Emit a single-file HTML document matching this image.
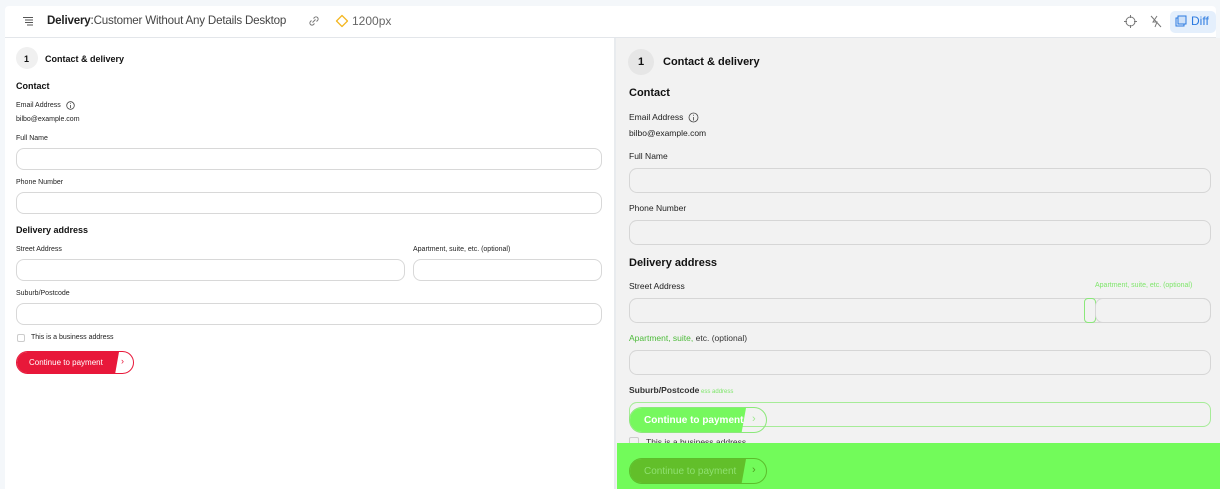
<!DOCTYPE html><html><head><style>
*{margin:0;padding:0;box-sizing:border-box}
body{width:1220px;height:489px;background:#f4f7fa;font-family:"Liberation Sans",sans-serif;color:#111;position:relative;overflow:hidden}
.a{position:absolute;white-space:nowrap}
.card{position:absolute;left:5px;top:6px;width:1211px;height:483px;background:#fff;border-radius:4px 4px 0 0}
.hdr{position:absolute;left:5px;top:37px;width:1211px;height:1px;background:#e3e6ea}
.inp{position:absolute;border:1px solid #d8d8d8;border-radius:8px;background:#fff}
.rp .inp{background:#f2f2f2;border-color:#d6d6d6}
.lb{font-size:7px;color:#222}
.rlb{font-size:8.5px;color:#222}
.b{font-weight:bold}
.g{color:#7ee66a}
</style></head><body>
<div class="card"></div>
<div class="hdr"></div>
<svg class="a" style="left:22px;top:16px" width="12" height="10"><path d="M1 1.5h10M3 4h8M3 6.5h8M5 9h6" stroke="#555" stroke-width="1"/></svg>
<div class="a" style="left:47px;top:14px;font-size:11.6px;color:#222;letter-spacing:-0.2px"><b>Delivery</b>:<span style="color:#444">Customer Without Any Details Desktop</span></div>
<svg class="a" style="left:308px;top:15px" width="12" height="12"><path d="M4.5 7.5l3-3M5.5 3.5l1-1a2.1 2.1 0 013 3l-1 1M6.5 8.5l-1 1a2.1 2.1 0 01-3-3l1-1" stroke="#777" stroke-width="1" fill="none"/></svg>
<svg class="a" style="left:335px;top:14px" width="14" height="14"><path d="M7 1.5L12.5 7 7 12.5 1.5 7z" stroke="#f3b724" stroke-width="1.3" fill="none" stroke-linejoin="round"/></svg>
<div class="a" style="left:352px;top:14px;font-size:12px;color:#666">1200px</div>
<svg class="a" style="left:1124px;top:15px" width="13" height="13"><circle cx="6.5" cy="6.5" r="4.5" stroke="#777" fill="none"/><path d="M6.5 0v3M6.5 10v3M0 6.5h3M10 6.5h3" stroke="#777"/></svg>
<svg class="a" style="left:1150px;top:15px" width="12" height="13"><path d="M7 1L3 7h4l-2 5M1 1l10 11" stroke="#777" fill="none"/></svg>
<div class="a" style="left:1170px;top:11px;width:46px;height:22px;background:#e4effc;border-radius:5px"></div>
<svg class="a" style="left:1175px;top:15px" width="12" height="12"><rect x="1" y="3" width="8" height="8" stroke="#2b7ae0" fill="none"/><rect x="3" y="1" width="8" height="8" stroke="#2b7ae0" fill="#cfe1f8"/></svg>
<div class="a" style="left:1191px;top:14px;font-size:12px;color:#2b7ae0">Diff</div>

<div class="a" style="left:614px;top:38px;width:2px;height:451px;background:#e8ebee"></div>

<div class="a" style="left:16px;top:47px;width:22px;height:22px;border-radius:50%;background:#f0f0f0"></div>
<div class="a b" style="left:24px;top:54px;font-size:9px">1</div>
<div class="a b" style="left:45px;top:54px;font-size:9px">Contact &amp; delivery</div>
<div class="a b" style="left:16px;top:81px;font-size:9px">Contact</div>
<div class="a lb" style="left:16px;top:102px">Email Address</div>
<svg class="a" style="left:66px;top:101px" width="9" height="9"><circle cx="4.5" cy="4.5" r="3.8" stroke="#444" stroke-width=".8" fill="none"/><path d="M4.5 4v3M4.5 2.2v.8" stroke="#444" stroke-width=".8"/></svg>
<div class="a lb" style="left:16px;top:116px">bilbo@example.com</div>
<div class="a lb" style="left:16px;top:135px">Full Name</div>
<div class="inp" style="left:16px;top:148px;width:586px;height:22px"></div>
<div class="a lb" style="left:16px;top:179px">Phone Number</div>
<div class="inp" style="left:16px;top:192px;width:586px;height:22px"></div>
<div class="a b" style="left:16px;top:225px;font-size:9px">Delivery address</div>
<div class="a lb" style="left:16px;top:246px">Street Address</div>
<div class="a lb" style="left:413px;top:246px">Apartment, suite, etc. (optional)</div>
<div class="inp" style="left:16px;top:259px;width:389px;height:22px"></div>
<div class="inp" style="left:413px;top:259px;width:189px;height:22px"></div>
<div class="a lb" style="left:16px;top:290px">Suburb/Postcode</div>
<div class="inp" style="left:16px;top:303px;width:586px;height:22px"></div>
<div class="a" style="left:17px;top:334px;width:8px;height:8px;border:1px solid #ccc;border-radius:2px"></div>
<div class="a lb" style="left:31px;top:334px">This is a business address</div>
<div class="a" style="left:16px;top:351px;width:118px;height:23px;border-radius:12px;border:1px solid #e8183a;background:#fff;overflow:hidden">
<div style="position:absolute;left:0;top:0;width:102px;height:23px;background:#e8183a;clip-path:polygon(0 0,100% 0,96% 100%,0 100%)"></div>
<div style="position:absolute;left:12px;top:6px;font-size:8px;color:#fff">Continue to payment</div>
<div style="position:absolute;left:104px;top:4px;font-size:9px;color:#e8183a">›</div></div>

<div class="rp">
<div class="a" style="left:616px;top:38px;width:604px;height:451px;background:#f2f2f2"></div>
<div class="a" style="left:628px;top:49px;width:26px;height:26px;border-radius:50%;background:#e6e6e6"></div>
<div class="a b" style="left:638px;top:56px;font-size:11px">1</div>
<div class="a b" style="left:663px;top:56px;font-size:11px">Contact &amp; delivery</div>
<div class="a b" style="left:629px;top:87px;font-size:11px">Contact</div>
<div class="a rlb" style="left:629px;top:112px">Email Address</div>
<svg class="a" style="left:688px;top:112px" width="11" height="11"><circle cx="5.5" cy="5.5" r="4.5" stroke="#444" stroke-width=".8" fill="none"/><path d="M5.5 5v3.5M5.5 2.8v.9" stroke="#444" stroke-width=".8"/></svg>
<div class="a rlb" style="left:629px;top:128px">bilbo@example.com</div>
<div class="a rlb" style="left:629px;top:151px">Full Name</div>
<div class="inp" style="left:629px;top:168px;width:582px;height:25px"></div>
<div class="a rlb" style="left:629px;top:203px">Phone Number</div>
<div class="inp" style="left:629px;top:220px;width:582px;height:25px"></div>
<div class="a b" style="left:629px;top:257px;font-size:11px">Delivery address</div>
<div class="a rlb" style="left:629px;top:281px">Street Address</div>
<div class="a g" style="left:1095px;top:282px;font-size:7px">Apartment, suite, etc. (optional)</div>
<div class="inp" style="left:629px;top:298px;width:582px;height:25px"></div>
<div class="a" style="left:1084px;top:298px;width:12px;height:25px;border:1px solid #8be87a;border-radius:4px"></div>
<div class="a" style="left:1095px;top:298px;width:116px;height:25px;border:1px solid #d6d6d6;border-radius:8px"></div>
<div class="a rlb" style="left:629px;top:333px;color:#333"><span style="color:#4dbb3a">Apartment, suite,</span> etc. (optional)</div>
<div class="inp" style="left:629px;top:350px;width:582px;height:25px"></div>
<div class="a rlb b" style="left:629px;top:385px;color:#333">Suburb/Postcode<span class="g" style="font-weight:normal;font-size:6px"> ess address</span></div>
<div class="inp" style="left:629px;top:402px;width:582px;height:25px;border-color:#a6ec98"></div>
<div class="a" style="left:629px;top:407px;width:138px;height:26px;border-radius:13px;border:1px solid #8be87a;overflow:hidden">
<div style="position:absolute;left:0;top:0;width:116px;height:26px;background:#76f85e;clip-path:polygon(0 0,100% 0,96% 100%,0 100%)"></div>
<div style="position:absolute;left:14px;top:7px;font-size:10px;color:#fff;font-weight:bold">Continue to payment</div>
<div style="position:absolute;left:122px;top:5px;font-size:11px;color:#9ee88f">›</div></div>
<div class="a" style="left:629px;top:437px;width:10px;height:10px;border:1px solid #ccc;border-radius:2px"></div>
<div class="a rlb" style="left:646px;top:437px;color:#333">This is a business address</div>
<div class="a" style="left:617px;top:443px;width:603px;height:46px;background:#72fb5a"></div>
<div class="a" style="left:629px;top:458px;width:138px;height:26px;border-radius:13px;border:1px solid #5cbd2c;overflow:hidden">
<div style="position:absolute;left:0;top:0;width:116px;height:26px;background:#62bf2a;clip-path:polygon(0 0,100% 0,96% 100%,0 100%)"></div>
<div style="position:absolute;left:14px;top:7px;font-size:10px;color:#8fe070">Continue to payment</div>
<div style="position:absolute;left:122px;top:5px;font-size:11px;color:#4e9f22">›</div></div>
</div>
</body></html>
